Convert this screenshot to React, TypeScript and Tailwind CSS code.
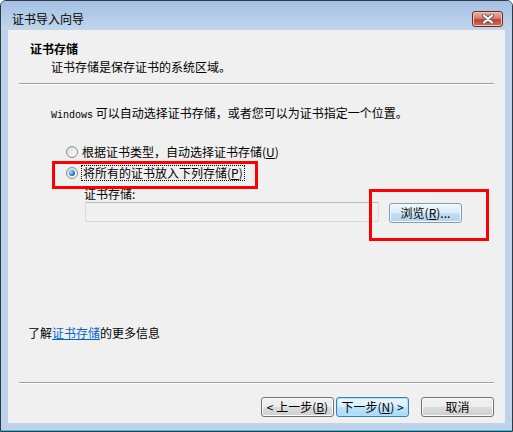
import React from "react";

const Radio = ({ checked }: { checked?: boolean }) => (
  <span className="w-[12px] h-[12px] rounded-full border border-[#8a8a8a] bg-linear-to-br from-[#dcdcdc] to-[#fdfdfd] flex items-center justify-center shrink-0">
    {checked && (
      <span className="w-[6px] h-[6px] rounded-full bg-[radial-gradient(circle_at_35%_35%,#a6e0ff,#2a7fd0_55%,#0b3d86)]" />
    )}
  </span>
);

const Button = ({ children, variant = "plain" }: { children: React.ReactNode; variant?: "plain" | "default" | "hover" }) => {
  const look =
    variant === "default"
      ? "border-[#3c7fb1] bg-[linear-gradient(#eaf6fd_0%,#d9f0fc_49%,#bee6fd_50%,#a7d9f5_100%)] shadow-[inset_0_0_0_1px_#aee3fb]"
      : variant === "hover"
        ? "border-[#7d9bb6] bg-[linear-gradient(#eef6fc_0%,#dcecf9_49%,#c4e0f3_50%,#b2d4ec_100%)] shadow-[inset_0_0_0_1px_#f5fbff]"
        : "border-[#707070] bg-[linear-gradient(#f2f2f2_0%,#ebebeb_49%,#dddddd_50%,#cfcfcf_100%)] shadow-[inset_0_0_0_1px_#fcfcfc]";
  return (
    <div className={`w-[73px] h-[20px] rounded-[3px] border flex items-center justify-center text-[12px] leading-[16px] text-black ${look}`}>
      {children}
    </div>
  );
};

export default function App() {
  return (
    <div className="w-[513px] h-[432px] bg-white font-['Noto_Sans_CJK_SC','Noto_Sans',sans-serif]">
      <div className="w-[513px] h-[432px] flex flex-col border border-[#2f3a44] rounded-t-[6px] bg-[#bed3eb] overflow-hidden">
        {/* title bar */}
        <div className="h-[29px] flex items-start pl-[11px] pr-[9px] bg-linear-to-b from-[#a4c0e3] to-[#c1d6ec]">
          <span className="pt-[10px] text-[12px] leading-[16px] text-black">证书导入向导</span>
          <div className="ml-auto mt-[10px] w-[31px] h-[16px] rounded-[3px] border border-[#6e2a22] bg-[linear-gradient(#eab2a4_0%,#d97d6c_45%,#c4422f_55%,#d0705e_100%)] shadow-[inset_0_0_0_1px_#f0c4b8] flex items-center justify-center">
            <svg width="14" height="10" viewBox="0 0 14 10">
              <path d="M3 1.5 L11 8.5 M11 1.5 L3 8.5" stroke="#5a5a5a" strokeWidth="4" strokeLinecap="round" />
              <path d="M3 1.5 L11 8.5 M11 1.5 L3 8.5" stroke="#ffffff" strokeWidth="2.2" strokeLinecap="round" />
            </svg>
          </div>
        </div>

        {/* frame sides + client */}
        <div className="px-[7px]">
          <div className="relative h-[393px] bg-[#f0f0f0] flex flex-col text-[12px] leading-[16px] text-black">
            <div className="pt-[11px] pl-[22px]">
              <div className="font-bold">证书存储</div>
              <div className="pl-[21px] mt-[2px]">证书存储是保存证书的系统区域。</div>
            </div>
            <div className="mx-[11px] mt-[8px] h-px bg-[#a0a0a0]" />
            <div className="mx-[11px] h-px bg-white" />

            <div className="mt-[20px] pl-[43px] h-[16px]">
              <span className="font-['Liberation_Mono',monospace] text-[10px]">Windows</span> 可以自动选择证书存储，或者您可以为证书指定一个位置。
            </div>

            <div className="mt-[23px] pl-[58px] flex items-center gap-[4px] h-[16px]">
              <Radio />
              <span>
                根据证书类型，自动选择证书存储(<u>U</u>)
              </span>
            </div>

            <div className="mt-[5px] pl-[58px] flex items-center gap-[3px] h-[16px]">
              <Radio checked />
              <span className="border border-dotted border-black px-px leading-[14px]">
                将所有的证书放入下列存储(<u>P</u>)
              </span>
            </div>

            <div className="mt-[5px] pl-[76px] h-[16px]">证书存储:</div>

            <div className="pl-[77px] flex items-start gap-[10px]">
              <div className="w-[294px] h-[20px] border border-[#d9d9d9] border-t-[#b9b9b9]" />
              <div className="mt-px">
                <Button variant="hover">
                  浏览(<u>R</u>)...
                </Button>
              </div>
            </div>

            <div className="mt-[102px] pl-[20px] h-[16px]">
              了解<span className="text-[#0066cc] underline">证书存储</span>的更多信息
            </div>

            <div className="mx-[11px] mt-[41px] h-px bg-[#a0a0a0]" />
            <div className="mx-[11px] h-px bg-white" />

            <div className="mt-[13px] pr-[11px] flex justify-end">
              <Button>
                &lt; 上一步(<u>B</u>)
              </Button>
              <div className="ml-[2px]">
                <Button variant="default">
                  下一步(<u>N</u>) &gt;
                </Button>
              </div>
              <div className="ml-[12px]">
                <Button>取消</Button>
              </div>
            </div>

            {/* red annotation boxes */}
            <div className="absolute left-[44px] top-[131px] w-[206px] h-[28px] border-[3px] border-[#ff0000]" />
            <div className="absolute left-[361px] top-[159px] w-[120px] h-[52px] border-[3px] border-[#ff0000]" />
          </div>
        </div>
        <div className="h-[7px]" />
        <div className="h-px bg-[#3cc3e4]" />
      </div>
    </div>
  );
}
